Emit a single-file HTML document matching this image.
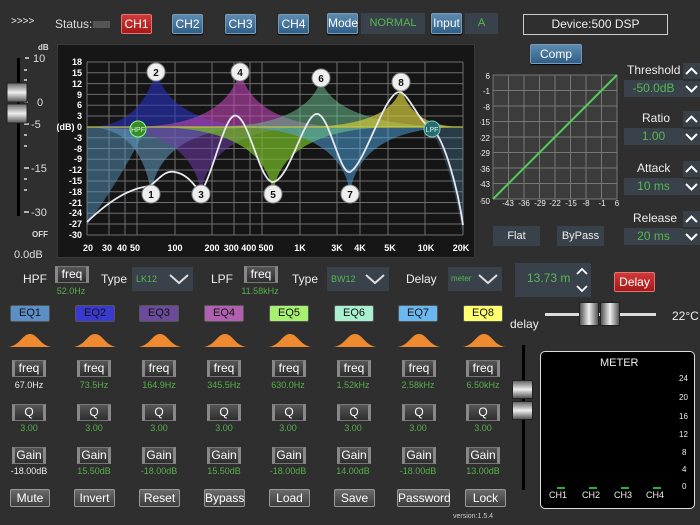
<!DOCTYPE html>
<html><head><meta charset="utf-8"><style>
*{margin:0;padding:0;box-sizing:border-box}
body{width:700px;height:525px;background:#2f2f2f;font-family:"Liberation Sans",sans-serif;color:#eee;position:relative;overflow:hidden}
.a{position:absolute}
.t{position:absolute;white-space:nowrap}
.bb{position:absolute;border:1px solid #7a9ab5;border-radius:2px;background:linear-gradient(#5d8bb0,#2f5f87);color:#fff;font-size:12px;text-align:center;box-shadow:0 1px 1px #000}
.rb{position:absolute;border:1px solid #d77;border-radius:2px;background:linear-gradient(#d03a3a,#a81818);color:#fff;font-size:12px;text-align:center}
.dk{position:absolute;background:#39414b;color:#57b84f;font-size:11px;text-align:center}
.gb{position:absolute;background:linear-gradient(#565656,#2e2e2e);border:1px solid #777;border-left:3px solid #888;border-right:3px solid #888;color:#fff;font-size:12px;text-align:center;height:17px;line-height:15px;width:34px}
.v{position:absolute;font-size:9px;text-align:center;width:60px}
.g{color:#56b04c}
.eq{position:absolute;width:40px;height:17px;font-size:11px;line-height:15px;text-align:center;color:#111;border:1px solid #555;border-radius:2px}
.bt{position:absolute;height:18px;line-height:16px;font-size:12px;text-align:center;color:#fff;background:linear-gradient(#6a6a6a,#3c3c3c);border:1px solid #999;border-radius:2px}
.ar{position:absolute;width:17px;height:16px;background:#3a4048}
.ar svg,.cv{display:block}
</style></head><body>
<div class="t" style="left:11px;top:16px;font-size:10px">&gt;&gt;&gt;&gt;</div>
<div class="t" style="left:55px;top:17px;font-size:12px;color:#ddd">Status:</div>
<div class="a" style="left:93px;top:21px;width:17px;height:7px;background:#555"></div>
<div class="rb" style="left:121px;top:14px;width:31px;height:20px;line-height:18px">CH1</div>
<div class="bb" style="left:172px;top:14px;width:31px;height:20px;line-height:18px">CH2</div>
<div class="bb" style="left:225px;top:14px;width:31px;height:20px;line-height:18px">CH3</div>
<div class="bb" style="left:278px;top:14px;width:31px;height:20px;line-height:18px">CH4</div>
<div class="bb" style="left:327px;top:13px;width:31px;height:21px;line-height:19px">Mode</div>
<div class="dk" style="left:361px;top:13px;width:64px;height:21px;line-height:21px">NORMAL</div>
<div class="bb" style="left:431px;top:13px;width:31px;height:21px;line-height:19px">Input</div>
<div class="dk" style="left:465px;top:13px;width:33px;height:21px;line-height:21px">A</div>
<div class="a" style="left:523px;top:14px;width:145px;height:21px;border:1px solid #ccc;font-size:12px;text-align:center;line-height:19px">Device:500 DSP</div>

<svg class="a" style="left:0;top:40px" width="58" height="230">
<rect x="17" y="18" width="3" height="158" fill="#000"/>
<g stroke="#ddd" stroke-width="1.5">
<line x1="25" y1="18" x2="29" y2="18"/><line x1="24" y1="30" x2="27" y2="30"/><line x1="24" y1="40" x2="27" y2="40"/><line x1="24" y1="62" x2="28" y2="62"/><line x1="24" y1="84" x2="29" y2="84"/><line x1="24" y1="95" x2="27" y2="95"/><line x1="24" y1="106" x2="27" y2="106"/><line x1="24" y1="128" x2="29" y2="128"/><line x1="24" y1="139" x2="27" y2="139"/><line x1="24" y1="150" x2="27" y2="150"/><line x1="24" y1="172" x2="29" y2="172"/>
</g>
<text x="38" y="10" fill="#ddd" font-size="8" font-weight="bold" font-family="Liberation Sans">dB</text>
<g fill="#ddd" font-size="11" font-family="Liberation Sans">
<text x="33" y="22">10</text><text x="37" y="66">0</text><text x="31" y="88">-5</text><text x="31" y="132">-15</text><text x="31" y="176">-30</text>
<text x="32" y="197" font-size="8" font-weight="bold">OFF</text></g>
<defs><linearGradient id="kn" x1="0" x2="0" y1="0" y2="1"><stop offset="0" stop-color="#666"/><stop offset=".5" stop-color="#eee"/><stop offset="1" stop-color="#555"/></linearGradient></defs>
<rect x="7" y="43" width="20" height="19" fill="url(#kn)" stroke="#222"/>
<rect x="7" y="64" width="20" height="19" fill="url(#kn)" stroke="#222"/>
</svg>
<div class="t" style="left:14px;top:249px;font-size:11px;color:#ddd">0.0dB</div>

<div class="a" style="left:57px;top:44px;width:418px;height:214px;background:#161616;border:1px solid #3a3a3a"></div>
<svg class="a" style="left:57px;top:44px" width="418" height="214" font-family="Liberation Sans">
<g transform="translate(-57,-44)">
<rect x="87" y="62" width="376" height="173" fill="#151515"/>
<g stroke="#6e6e6e" stroke-width="1">
<line x1="87" x2="463" y1="62" y2="62"/><line x1="87" x2="463" y1="72.8" y2="72.8"/><line x1="87" x2="463" y1="83.6" y2="83.6"/><line x1="87" x2="463" y1="94.4" y2="94.4"/><line x1="87" x2="463" y1="105.2" y2="105.2"/><line x1="87" x2="463" y1="116" y2="116"/><line x1="87" x2="463" y1="127" y2="127"/><line x1="87" x2="463" y1="137.7" y2="137.7"/><line x1="87" x2="463" y1="148.5" y2="148.5"/><line x1="87" x2="463" y1="159.3" y2="159.3"/><line x1="87" x2="463" y1="170" y2="170"/><line x1="87" x2="463" y1="181" y2="181"/><line x1="87" x2="463" y1="191.7" y2="191.7"/><line x1="87" x2="463" y1="202.5" y2="202.5"/><line x1="87" x2="463" y1="213.3" y2="213.3"/><line x1="87" x2="463" y1="224" y2="224"/><line x1="87" x2="463" y1="235" y2="235"/>
<line y1="62" y2="235" x1="87" x2="87"/><line y1="62" y2="235" x1="109" x2="109"/><line y1="62" y2="235" x1="125" x2="125"/><line y1="62" y2="235" x1="137" x2="137"/><line y1="62" y2="235" x1="175" x2="175"/><line y1="62" y2="235" x1="212" x2="212"/><line y1="62" y2="235" x1="234" x2="234"/><line y1="62" y2="235" x1="250" x2="250"/><line y1="62" y2="235" x1="262" x2="262"/><line y1="62" y2="235" x1="300" x2="300"/><line y1="62" y2="235" x1="337" x2="337"/><line y1="62" y2="235" x1="360" x2="360"/><line y1="62" y2="235" x1="388" x2="388"/><line y1="62" y2="235" x1="425" x2="425"/><line y1="62" y2="235" x1="463" x2="463"/>
</g>
<path d="M87,127 Q140,127 156,71 Q172,127 270,127Z" fill="rgba(40,50,190,.6)"/>
<path d="M130,127 Q225,127 240,71 Q255,127 350,127Z" fill="rgba(190,70,180,.6)"/>
<path d="M210,127 Q305,127 321,80 Q337,127 463,127Z" fill="rgba(110,200,150,.5)"/>
<path d="M300,127 Q390,127 401,88 Q412,127 463,127Z" fill="rgba(210,200,60,.7)"/>
<path d="M87,127 Q140,127 151,192 Q162,127 263,127Z" fill="rgba(110,170,210,.5)"/>
<path d="M87,127 Q190,127 201,192 Q212,127 315,127Z" fill="rgba(110,60,170,.55)"/>
<path d="M150,127 Q262,127 273,192 Q284,127 400,127Z" fill="rgba(120,190,40,.7)"/>
<path d="M230,127 Q339,127 350,192 Q361,127 463,127Z" fill="rgba(80,170,230,.5)"/>
<path d="M87,127 L87,225 Q120,180 145,130Z" fill="rgba(90,150,190,.5)"/>
<path d="M425,127 L463,127 L463,235 Q450,160 430,128Z" fill="rgba(90,150,190,.3)"/>
<line x1="87" x2="463" y1="127" y2="127" stroke="#cc3" stroke-width="1.5" opacity=".7"/>
<path d="M87,222 C110,200 130,188 150,186 C160,178 165,170 175,172 C190,175 195,188 201,192 C215,170 225,110 237,116 C250,122 260,182 273,182 C290,180 305,110 318,114 C330,118 340,175 350,172 C365,165 385,90 400,92 C410,95 420,125 432,128 C445,140 458,190 463,225" fill="none" stroke="#e8e8f0" stroke-width="1.8"/>
<g fill="#fff" font-size="9" font-weight="bold" text-anchor="end">
<text x="82" y="65">18</text><text x="82" y="76">15</text><text x="82" y="87">12</text><text x="82" y="98">9</text><text x="82" y="108">6</text><text x="82" y="119">3</text><text x="82" y="130">(dB) 0</text><text x="82" y="141">-3</text><text x="82" y="152">-8</text><text x="82" y="162">-9</text><text x="82" y="173">-12</text><text x="82" y="184">-15</text><text x="82" y="195">-18</text><text x="82" y="206">-21</text><text x="82" y="216">-24</text><text x="82" y="227">-27</text><text x="82" y="238">-30</text>
</g>
<g fill="#fff" font-size="9" font-weight="bold" text-anchor="middle">
<text x="88" y="251">20</text><text x="107" y="251">30</text><text x="122" y="251">40</text><text x="135" y="251">50</text><text x="175" y="251">100</text><text x="212" y="251">200</text><text x="240" y="251">300 400</text><text x="266" y="251">500</text><text x="300" y="251">1K</text><text x="337" y="251">3K</text><text x="360" y="251">4K</text><text x="390" y="251">5K</text><text x="426" y="251">10K</text><text x="461" y="251">20K</text>
</g>
<g font-size="10" font-weight="bold" text-anchor="middle" fill="#111" stroke-width="1">
<circle cx="151" cy="194" r="9" fill="#eee" stroke="#888"/><text x="151" y="198">1</text>
<circle cx="156" cy="72" r="9" fill="#eee" stroke="#888"/><text x="156" y="76">2</text>
<circle cx="201" cy="194" r="9" fill="#eee" stroke="#888"/><text x="201" y="198">3</text>
<circle cx="240" cy="72" r="9" fill="#eee" stroke="#888"/><text x="240" y="76">4</text>
<circle cx="273" cy="194" r="9" fill="#eee" stroke="#888"/><text x="273" y="198">5</text>
<circle cx="321" cy="78" r="9" fill="#eee" stroke="#888"/><text x="321" y="82">6</text>
<circle cx="350" cy="194" r="9" fill="#eee" stroke="#888"/><text x="350" y="198">7</text>
<circle cx="401" cy="82" r="9" fill="#eee" stroke="#888"/><text x="401" y="86">8</text>
</g>
<circle cx="138" cy="129" r="8" fill="#3a8a2a" stroke="#8f8"/><text x="138" y="132" font-size="7" fill="#cfc" text-anchor="middle">HPF</text>
<circle cx="432" cy="129" r="8" fill="#2a6a6a" stroke="#7cc"/><text x="432" y="132" font-size="7" fill="#cff" text-anchor="middle">LPF</text>
</g></svg>

<div class="bb" style="left:530px;top:44px;width:52px;height:20px;line-height:18px;font-size:12px">Comp</div>
<svg class="a" style="left:480px;top:70px" width="140" height="140" font-family="Liberation Sans">
<rect x="13" y="5" width="124" height="124" fill="#3c3c3c"/>
<g stroke="#777"><path d="M13,5H137M13,20.5H137M13,36H137M13,51.5H137M13,67H137M13,82.5H137M13,98H137M13,113.5H137M13,129H137M13,5V129M28.5,5V129M44,5V129M59.5,5V129M75,5V129M90.5,5V129M106,5V129M121.5,5V129M137,5V129"/></g>
<line x1="13" y1="129" x2="137" y2="5" stroke="#5c5" stroke-width="2"/>
<g fill="#eee" font-size="8" text-anchor="end"><text x="10" y="9">6</text><text x="10" y="24">-1</text><text x="10" y="40">-8</text><text x="10" y="55">-15</text><text x="10" y="71">-22</text><text x="10" y="86">-29</text><text x="10" y="102">-36</text><text x="10" y="117">-43</text><text x="10" y="134">-50</text></g>
<g fill="#eee" font-size="8" text-anchor="middle"><text x="28" y="136">-43</text><text x="44" y="136">-36</text><text x="60" y="136">-29</text><text x="75" y="136">-22</text><text x="91" y="136">-15</text><text x="106" y="136">-8</text><text x="122" y="136">-1</text><text x="137" y="136">6</text></g>
</svg>
<div class="dk" style="left:493px;top:226px;width:47px;height:20px;line-height:20px;color:#eee;font-size:11px">Flat</div>
<div class="dk" style="left:557px;top:226px;width:47px;height:20px;line-height:20px;color:#eee;font-size:11px">ByPass</div>

<div class="t" style="left:627px;top:63px;font-size:12px">Threshold</div>
<div class="ar" style="left:683px;top:63px"><svg width="17" height="16"><path d="M3,11 L8.5,5.5 L14,11" stroke="#fff" stroke-width="2" fill="none"/></svg></div>
<div class="dk" style="left:624px;top:80px;width:59px;height:17px;line-height:17px;font-size:12px">-50.0dB</div>
<div class="ar" style="left:683px;top:81px"><svg width="17" height="16"><path d="M3,5 L8.5,10.5 L14,5" stroke="#fff" stroke-width="2" fill="none"/></svg></div>
<div class="t" style="left:642px;top:111px;font-size:12px">Ratio</div>
<div class="ar" style="left:683px;top:111px"><svg width="17" height="16"><path d="M3,11 L8.5,5.5 L14,11" stroke="#fff" stroke-width="2" fill="none"/></svg></div>
<div class="dk" style="left:624px;top:128px;width:59px;height:17px;line-height:17px;font-size:12px">1.00</div>
<div class="ar" style="left:683px;top:129px"><svg width="17" height="16"><path d="M3,5 L8.5,10.5 L14,5" stroke="#fff" stroke-width="2" fill="none"/></svg></div>
<div class="t" style="left:637px;top:161px;font-size:12px">Attack</div>
<div class="ar" style="left:683px;top:161px"><svg width="17" height="16"><path d="M3,11 L8.5,5.5 L14,11" stroke="#fff" stroke-width="2" fill="none"/></svg></div>
<div class="dk" style="left:624px;top:178px;width:59px;height:17px;line-height:17px;font-size:12px">10 ms</div>
<div class="ar" style="left:683px;top:179px"><svg width="17" height="16"><path d="M3,5 L8.5,10.5 L14,5" stroke="#fff" stroke-width="2" fill="none"/></svg></div>
<div class="t" style="left:633px;top:211px;font-size:12px">Release</div>
<div class="ar" style="left:683px;top:211px"><svg width="17" height="16"><path d="M3,11 L8.5,5.5 L14,11" stroke="#fff" stroke-width="2" fill="none"/></svg></div>
<div class="dk" style="left:624px;top:228px;width:59px;height:17px;line-height:17px;font-size:12px">20 ms</div>
<div class="ar" style="left:683px;top:229px"><svg width="17" height="16"><path d="M3,5 L8.5,10.5 L14,5" stroke="#fff" stroke-width="2" fill="none"/></svg></div>

<div class="t" style="left:23px;top:272px;font-size:12px">HPF</div>
<div class="gb" style="left:55px;top:266px">freq</div><div class="v g" style="left:41px;top:286px">52.0Hz</div>
<div class="t" style="left:101px;top:272px;font-size:12px">Type</div>
<div class="dk" style="left:132px;top:267px;width:61px;height:24px;text-align:left;padding-left:4px;line-height:24px;font-size:9px">LK12</div>
<svg class="a" style="left:168px;top:272px" width="22" height="14"><path d="M2,3 L11,11 L20,3" stroke="#ddd" stroke-width="2" fill="none"/></svg>
<div class="t" style="left:211px;top:272px;font-size:12px">LPF</div>
<div class="gb" style="left:244px;top:266px">freq</div><div class="v g" style="left:230px;top:286px">11.58kHz</div>
<div class="t" style="left:292px;top:272px;font-size:12px">Type</div>
<div class="dk" style="left:327px;top:267px;width:62px;height:24px;text-align:left;padding-left:4px;line-height:24px;font-size:9px">BW12</div>
<svg class="a" style="left:364px;top:272px" width="22" height="14"><path d="M2,3 L11,11 L20,3" stroke="#ddd" stroke-width="2" fill="none"/></svg>
<div class="t" style="left:406px;top:272px;font-size:12px">Delay</div>
<div class="dk" style="left:448px;top:267px;width:54px;height:24px;text-align:left;padding-left:3px;line-height:24px;font-size:8px">meter</div>
<svg class="a" style="left:477px;top:272px" width="22" height="14"><path d="M2,3 L11,11 L20,3" stroke="#ddd" stroke-width="2" fill="none"/></svg>
<div class="dk" style="left:515px;top:263px;width:76px;height:34px;line-height:30px;text-align:left;padding-left:12px;font-size:12px">13.73 m</div>
<svg class="a" style="left:574px;top:265px" width="16" height="30"><path d="M3,9 L8,4 L13,9 M3,21 L8,26 L13,21" stroke="#fff" stroke-width="1.8" fill="none"/></svg>
<div class="rb" style="left:614px;top:272px;width:41px;height:20px;line-height:18px">Delay</div>

<div class="eq" style="left:10px;top:305px;background:#5b8fc6">EQ1</div>
<div class="eq" style="left:75px;top:305px;background:#3a3ad0">EQ2</div>
<div class="eq" style="left:139px;top:305px;background:#6c4c9a">EQ3</div>
<div class="eq" style="left:204px;top:305px;background:#b060b0">EQ4</div>
<div class="eq" style="left:269px;top:305px;background:#a8f070">EQ5</div>
<div class="eq" style="left:334px;top:305px;background:#a8f0d0">EQ6</div>
<div class="eq" style="left:398px;top:305px;background:#6ab8f0">EQ7</div>
<div class="eq" style="left:463px;top:305px;background:#ffff70">EQ8</div>
<svg class="a" style="left:0;top:330px" width="510" height="20">
<g fill="#f08a30">
<path d="M8,17 C20,16 22,4 30,4 C38,4 40,16 52,17Z"/><path d="M73,17 C85,16 87,4 95,4 C103,4 105,16 117,17Z"/><path d="M138,17 C150,16 152,4 160,4 C168,4 170,16 182,17Z"/><path d="M203,17 C215,16 217,4 225,4 C233,4 235,16 247,17Z"/><path d="M268,17 C280,16 282,4 290,4 C298,4 300,16 312,17Z"/><path d="M333,17 C345,16 347,4 355,4 C363,4 365,16 377,17Z"/><path d="M397,17 C409,16 411,4 419,4 C427,4 429,16 441,17Z"/><path d="M462,17 C474,16 476,4 484,4 C492,4 494,16 506,17Z"/>
</g></svg>

<div class="gb" style="left:12px;top:360px">freq</div><div class="v" style="left:-1px;top:380px">67.0Hz</div>
<div class="gb" style="left:77px;top:360px">freq</div><div class="v g" style="left:64px;top:380px">73.5Hz</div>
<div class="gb" style="left:142px;top:360px">freq</div><div class="v g" style="left:129px;top:380px">164.9Hz</div>
<div class="gb" style="left:207px;top:360px">freq</div><div class="v g" style="left:194px;top:380px">345.5Hz</div>
<div class="gb" style="left:272px;top:360px">freq</div><div class="v g" style="left:258px;top:380px">630.0Hz</div>
<div class="gb" style="left:337px;top:360px">freq</div><div class="v g" style="left:323px;top:380px">1.52kHz</div>
<div class="gb" style="left:402px;top:360px">freq</div><div class="v g" style="left:388px;top:380px">2.58kHz</div>
<div class="gb" style="left:466px;top:360px">freq</div><div class="v g" style="left:453px;top:380px">6.50kHz</div>

<div class="gb" style="left:12px;top:404px">Q</div><div class="v g" style="left:-1px;top:423px">3.00</div>
<div class="gb" style="left:77px;top:404px">Q</div><div class="v g" style="left:64px;top:423px">3.00</div>
<div class="gb" style="left:142px;top:404px">Q</div><div class="v g" style="left:129px;top:423px">3.00</div>
<div class="gb" style="left:207px;top:404px">Q</div><div class="v g" style="left:194px;top:423px">3.00</div>
<div class="gb" style="left:272px;top:404px">Q</div><div class="v g" style="left:258px;top:423px">3.00</div>
<div class="gb" style="left:337px;top:404px">Q</div><div class="v g" style="left:323px;top:423px">3.00</div>
<div class="gb" style="left:402px;top:404px">Q</div><div class="v g" style="left:388px;top:423px">3.00</div>
<div class="gb" style="left:466px;top:404px">Q</div><div class="v g" style="left:453px;top:423px">3.00</div>

<div class="gb" style="left:12px;top:447px">Gain</div><div class="v" style="left:-1px;top:466px">-18.00dB</div>
<div class="gb" style="left:77px;top:447px">Gain</div><div class="v g" style="left:64px;top:466px">15.50dB</div>
<div class="gb" style="left:142px;top:447px">Gain</div><div class="v g" style="left:129px;top:466px">-18.00dB</div>
<div class="gb" style="left:207px;top:447px">Gain</div><div class="v g" style="left:194px;top:466px">15.50dB</div>
<div class="gb" style="left:272px;top:447px">Gain</div><div class="v g" style="left:258px;top:466px">-18.00dB</div>
<div class="gb" style="left:337px;top:447px">Gain</div><div class="v g" style="left:323px;top:466px">14.00dB</div>
<div class="gb" style="left:402px;top:447px">Gain</div><div class="v g" style="left:388px;top:466px">-18.00dB</div>
<div class="gb" style="left:466px;top:447px">Gain</div><div class="v g" style="left:453px;top:466px">13.00dB</div>

<div class="bt" style="left:10px;top:489px;width:40px">Mute</div>
<div class="bt" style="left:74px;top:489px;width:41px">Invert</div>
<div class="bt" style="left:139px;top:489px;width:41px">Reset</div>
<div class="bt" style="left:204px;top:489px;width:41px">Bypass</div>
<div class="bt" style="left:269px;top:489px;width:41px">Load</div>
<div class="bt" style="left:334px;top:489px;width:41px">Save</div>
<div class="bt" style="left:397px;top:489px;width:53px">Password</div>
<div class="bt" style="left:465px;top:489px;width:41px">Lock</div>
<div class="t" style="left:453px;top:513px;font-size:7px;color:#ccc">version:1.5.4</div>

<div class="t" style="left:510px;top:317px;font-size:12px">delay</div>
<div class="a" style="left:545px;top:313px;width:111px;height:3px;background:#ddd"></div>
<div class="a" style="left:579px;top:302px;width:20px;height:24px;background:linear-gradient(90deg,#555,#eee,#555);border:1px solid #222"></div>
<div class="a" style="left:600px;top:302px;width:20px;height:24px;background:linear-gradient(90deg,#555,#eee,#555);border:1px solid #222"></div>
<div class="t" style="left:672px;top:309px;font-size:12px">22°C</div>

<div class="a" style="left:522px;top:345px;width:3px;height:145px;background:#000"></div>
<div class="a" style="left:512px;top:380px;width:21px;height:19px;background:linear-gradient(#666,#eee,#555);border:1px solid #222"></div>
<div class="a" style="left:512px;top:401px;width:21px;height:19px;background:linear-gradient(#666,#eee,#555);border:1px solid #222"></div>

<div class="a" style="left:540px;top:351px;width:155px;height:158px;background:#000;border:1.5px solid #ddd;border-radius:5px"></div>
<div class="t" style="left:600px;top:357px;font-size:11px">METER</div>
<div class="t" style="left:679px;top:374px;font-size:8px">24</div>
<div class="t" style="left:679px;top:393px;font-size:8px">20</div>
<div class="t" style="left:679px;top:412px;font-size:8px">16</div>
<div class="t" style="left:679px;top:430px;font-size:8px">12</div>
<div class="t" style="left:682px;top:448px;font-size:8px">8</div>
<div class="t" style="left:682px;top:465px;font-size:8px">4</div>
<div class="t" style="left:682px;top:482px;font-size:8px">0</div>
<div class="a" style="left:557px;top:487px;width:8px;height:2px;background:#3a3"></div>
<div class="a" style="left:589px;top:487px;width:8px;height:2px;background:#3a3"></div>
<div class="a" style="left:621px;top:487px;width:8px;height:2px;background:#3a3"></div>
<div class="a" style="left:653px;top:487px;width:8px;height:2px;background:#3a3"></div>
<div class="t" style="left:549px;top:490px;font-size:9px">CH1</div>
<div class="t" style="left:582px;top:490px;font-size:9px">CH2</div>
<div class="t" style="left:614px;top:490px;font-size:9px">CH3</div>
<div class="t" style="left:646px;top:490px;font-size:9px">CH4</div>
</body></html>
